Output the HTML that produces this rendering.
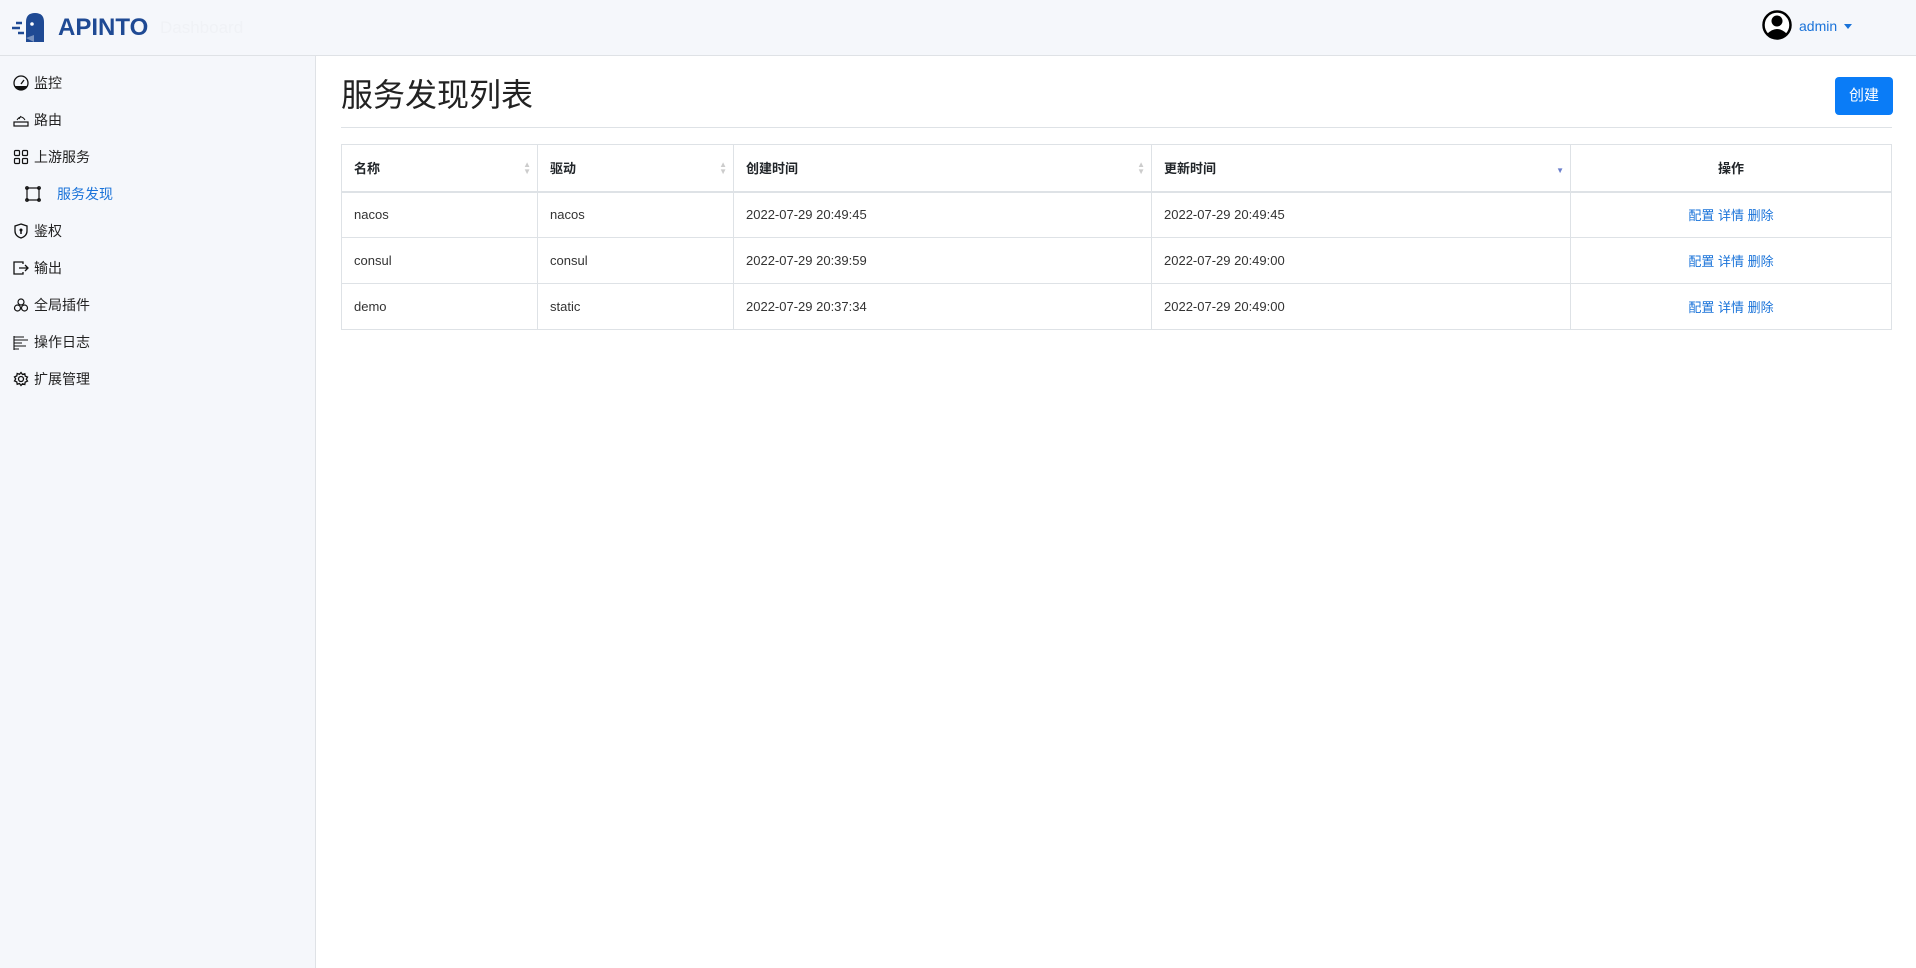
<!DOCTYPE html>
<html><head><meta charset="utf-8"><style>
*{box-sizing:border-box;margin:0;padding:0}
body{width:1916px;height:968px;background:#fff;font-family:"Liberation Sans","Noto Sans CJK SC",sans-serif;color:#212529;position:relative;overflow:hidden}
.hdr{position:absolute;left:0;top:0;width:1916px;height:56px;background:#f5f7fb;border-bottom:1px solid #dfe2e6}
.side{position:absolute;left:0;top:56px;width:316px;height:912px;background:#f5f7fb;border-right:1px solid #dfe2e6}
.mi{position:absolute;left:13px;font-size:14px;color:#222;display:flex;align-items:center;gap:5px;height:20px}
.mi svg{width:16px;height:16px}
table{position:absolute;left:341px;top:144px;width:1551px;border-collapse:collapse;font-size:13px}
td,th{border:1px solid #dee2e6;padding:0 12px;text-align:left;position:relative}
th{height:47px;font-weight:bold;border-bottom:2px solid #dee2e6}
td{height:46px;color:#333}
.s{position:absolute;right:6px;top:16px;font-size:8px;color:#ccc;line-height:7px}
.op{text-align:center;color:#1a73d9}
</style></head><body>
<div class="hdr">
<svg style="position:absolute;left:12px;top:12px" width="40" height="32" viewBox="0 0 40 32"><path d="M0 16h8M4 11h6M6 21h6" stroke="#1f4a94" stroke-width="2.5"/><path d="M14 30V10q0-9 9-9t9 9v20z" fill="#1f4a94"/><circle cx="20" cy="12" r="1.8" fill="#fff"/><path d="M14 26l8-3v7z" fill="#fff" opacity=".4"/></svg>
<div style="position:absolute;left:58px;top:14px;font-size:24px;font-weight:bold;color:#1f4a94">APINTO</div>
<div style="position:absolute;left:160px;top:18px;font-size:17px;color:#f0f2f6">Dashboard</div>
<svg style="position:absolute;left:1762px;top:10px" width="30" height="30" viewBox="0 0 30 30"><circle cx="15" cy="15" r="13.5" fill="#fff" stroke="#000" stroke-width="2.5"/><circle cx="15" cy="11" r="5.5" fill="#000"/><path d="M5 24q10-10 20 0q-10 8-20 0" fill="#000"/></svg>
<div style="position:absolute;left:1799px;top:18px;font-size:14px;color:#1a73d9">admin</div>
<div style="position:absolute;left:1844px;top:24px;border:4px solid transparent;border-top:5px solid #1a73d9"></div>
</div>
<div class="side">
<div class="mi" style="top:17px"><svg viewBox="0 0 16 16"><circle cx="8" cy="8" r="7" fill="none" stroke="#111" stroke-width="1.3"/><path d="M2 11h12v2l-6 2-6-2z" fill="#111"/><path d="M8 9l3-4" stroke="#111" stroke-width="1.3"/></svg>监控</div>
<div class="mi" style="top:54px"><svg viewBox="0 0 16 16"><rect x="1" y="10" width="14" height="4" fill="none" stroke="#111" stroke-width="1.2"/><path d="M4 8q4-6 8 0M6 7l2-3" stroke="#111" fill="none"/></svg>路由</div>
<div class="mi" style="top:91px"><svg viewBox="0 0 16 16" fill="none" stroke="#111" stroke-width="1.2"><rect x="1.5" y="1.5" width="5" height="5" rx="1"/><rect x="9.5" y="1.5" width="5" height="5" rx="1"/><rect x="1.5" y="9.5" width="5" height="5" rx="1"/><rect x="9.5" y="9.5" width="5" height="5" rx="1"/></svg>上游服务</div>
<div class="mi" style="top:128px;left:25px;color:#1a73d9;gap:16px"><svg viewBox="0 0 16 16" fill="none" stroke="#111" stroke-width="1.2"><rect x="2" y="2" width="12" height="12"/><circle cx="2" cy="2" r="1.3"/><circle cx="14" cy="2" r="1.3"/><circle cx="2" cy="14" r="1.3"/><circle cx="14" cy="14" r="1.3"/></svg>服务发现</div>
<div class="mi" style="top:165px"><svg viewBox="0 0 16 16"><path d="M8 1l6 2v5q0 5-6 7q-6-2-6-7V3z" fill="none" stroke="#111" stroke-width="1.3"/><circle cx="8" cy="7" r="1.5" fill="#111"/><path d="M8 7v4" stroke="#111" stroke-width="1.5"/></svg>鉴权</div>
<div class="mi" style="top:202px"><svg viewBox="0 0 16 16" fill="none" stroke="#111" stroke-width="1.3"><path d="M10 4V2H1v12h9v-2M6 8h9M12 5l3 3-3 3"/></svg>输出</div>
<div class="mi" style="top:239px"><svg viewBox="0 0 16 16" fill="none" stroke="#111" stroke-width="1.2"><circle cx="8" cy="5" r="3"/><circle cx="4.5" cy="11" r="3"/><circle cx="11.5" cy="11" r="3"/></svg>全局插件</div>
<div class="mi" style="top:276px"><svg viewBox="0 0 16 16" stroke="#111" stroke-width="1.1"><path d="M1 3h10M1 6h14M1 9h8M1 12h12M1 15h5M1 2v14"/></svg>操作日志</div>
<div class="mi" style="top:313px"><svg viewBox="0 0 16 16" fill="none" stroke="#111" stroke-width="1.3"><circle cx="8" cy="8" r="2.5"/><path d="M8 1.5l1.5 2 2.3-.8.4 2.4 2.3 1-1.2 2 1.2 2-2.3 1-.4 2.4-2.3-.8L8 14.5l-1.5-2-2.3.8-.4-2.4-2.3-1 1.2-2-1.2-2 2.3-1 .4-2.4 2.3.8z"/></svg>扩展管理</div>
</div>
<div style="position:absolute;left:341px;top:74px;font-size:32px;color:#222;line-height:42px">服务发现列表</div>
<div style="position:absolute;left:341px;top:127px;width:1551px;border-top:1px solid #dee2e6"></div>
<div style="position:absolute;left:1835px;top:77px;width:58px;height:38px;background:#0a7cf7;border-radius:4px;color:#fff;font-size:15px;text-align:center;line-height:38px">创建</div>
<table>
<tr><th style="width:196px">名称<span class="s">▲<br>▼</span></th><th style="width:196px">驱动<span class="s">▲<br>▼</span></th><th style="width:418px">创建时间<span class="s">▲<br>▼</span></th><th style="width:419px">更新时间<span class="s" style="top:22px;color:#6b7fcc">▼</span></th><th style="text-align:center">操作</th></tr>
<tr><td>nacos</td><td>nacos</td><td>2022-07-29 20:49:45</td><td>2022-07-29 20:49:45</td><td class="op">配置 详情 删除</td></tr>
<tr><td>consul</td><td>consul</td><td>2022-07-29 20:39:59</td><td>2022-07-29 20:49:00</td><td class="op">配置 详情 删除</td></tr>
<tr><td>demo</td><td>static</td><td>2022-07-29 20:37:34</td><td>2022-07-29 20:49:00</td><td class="op">配置 详情 删除</td></tr>
</table>
</body></html>
